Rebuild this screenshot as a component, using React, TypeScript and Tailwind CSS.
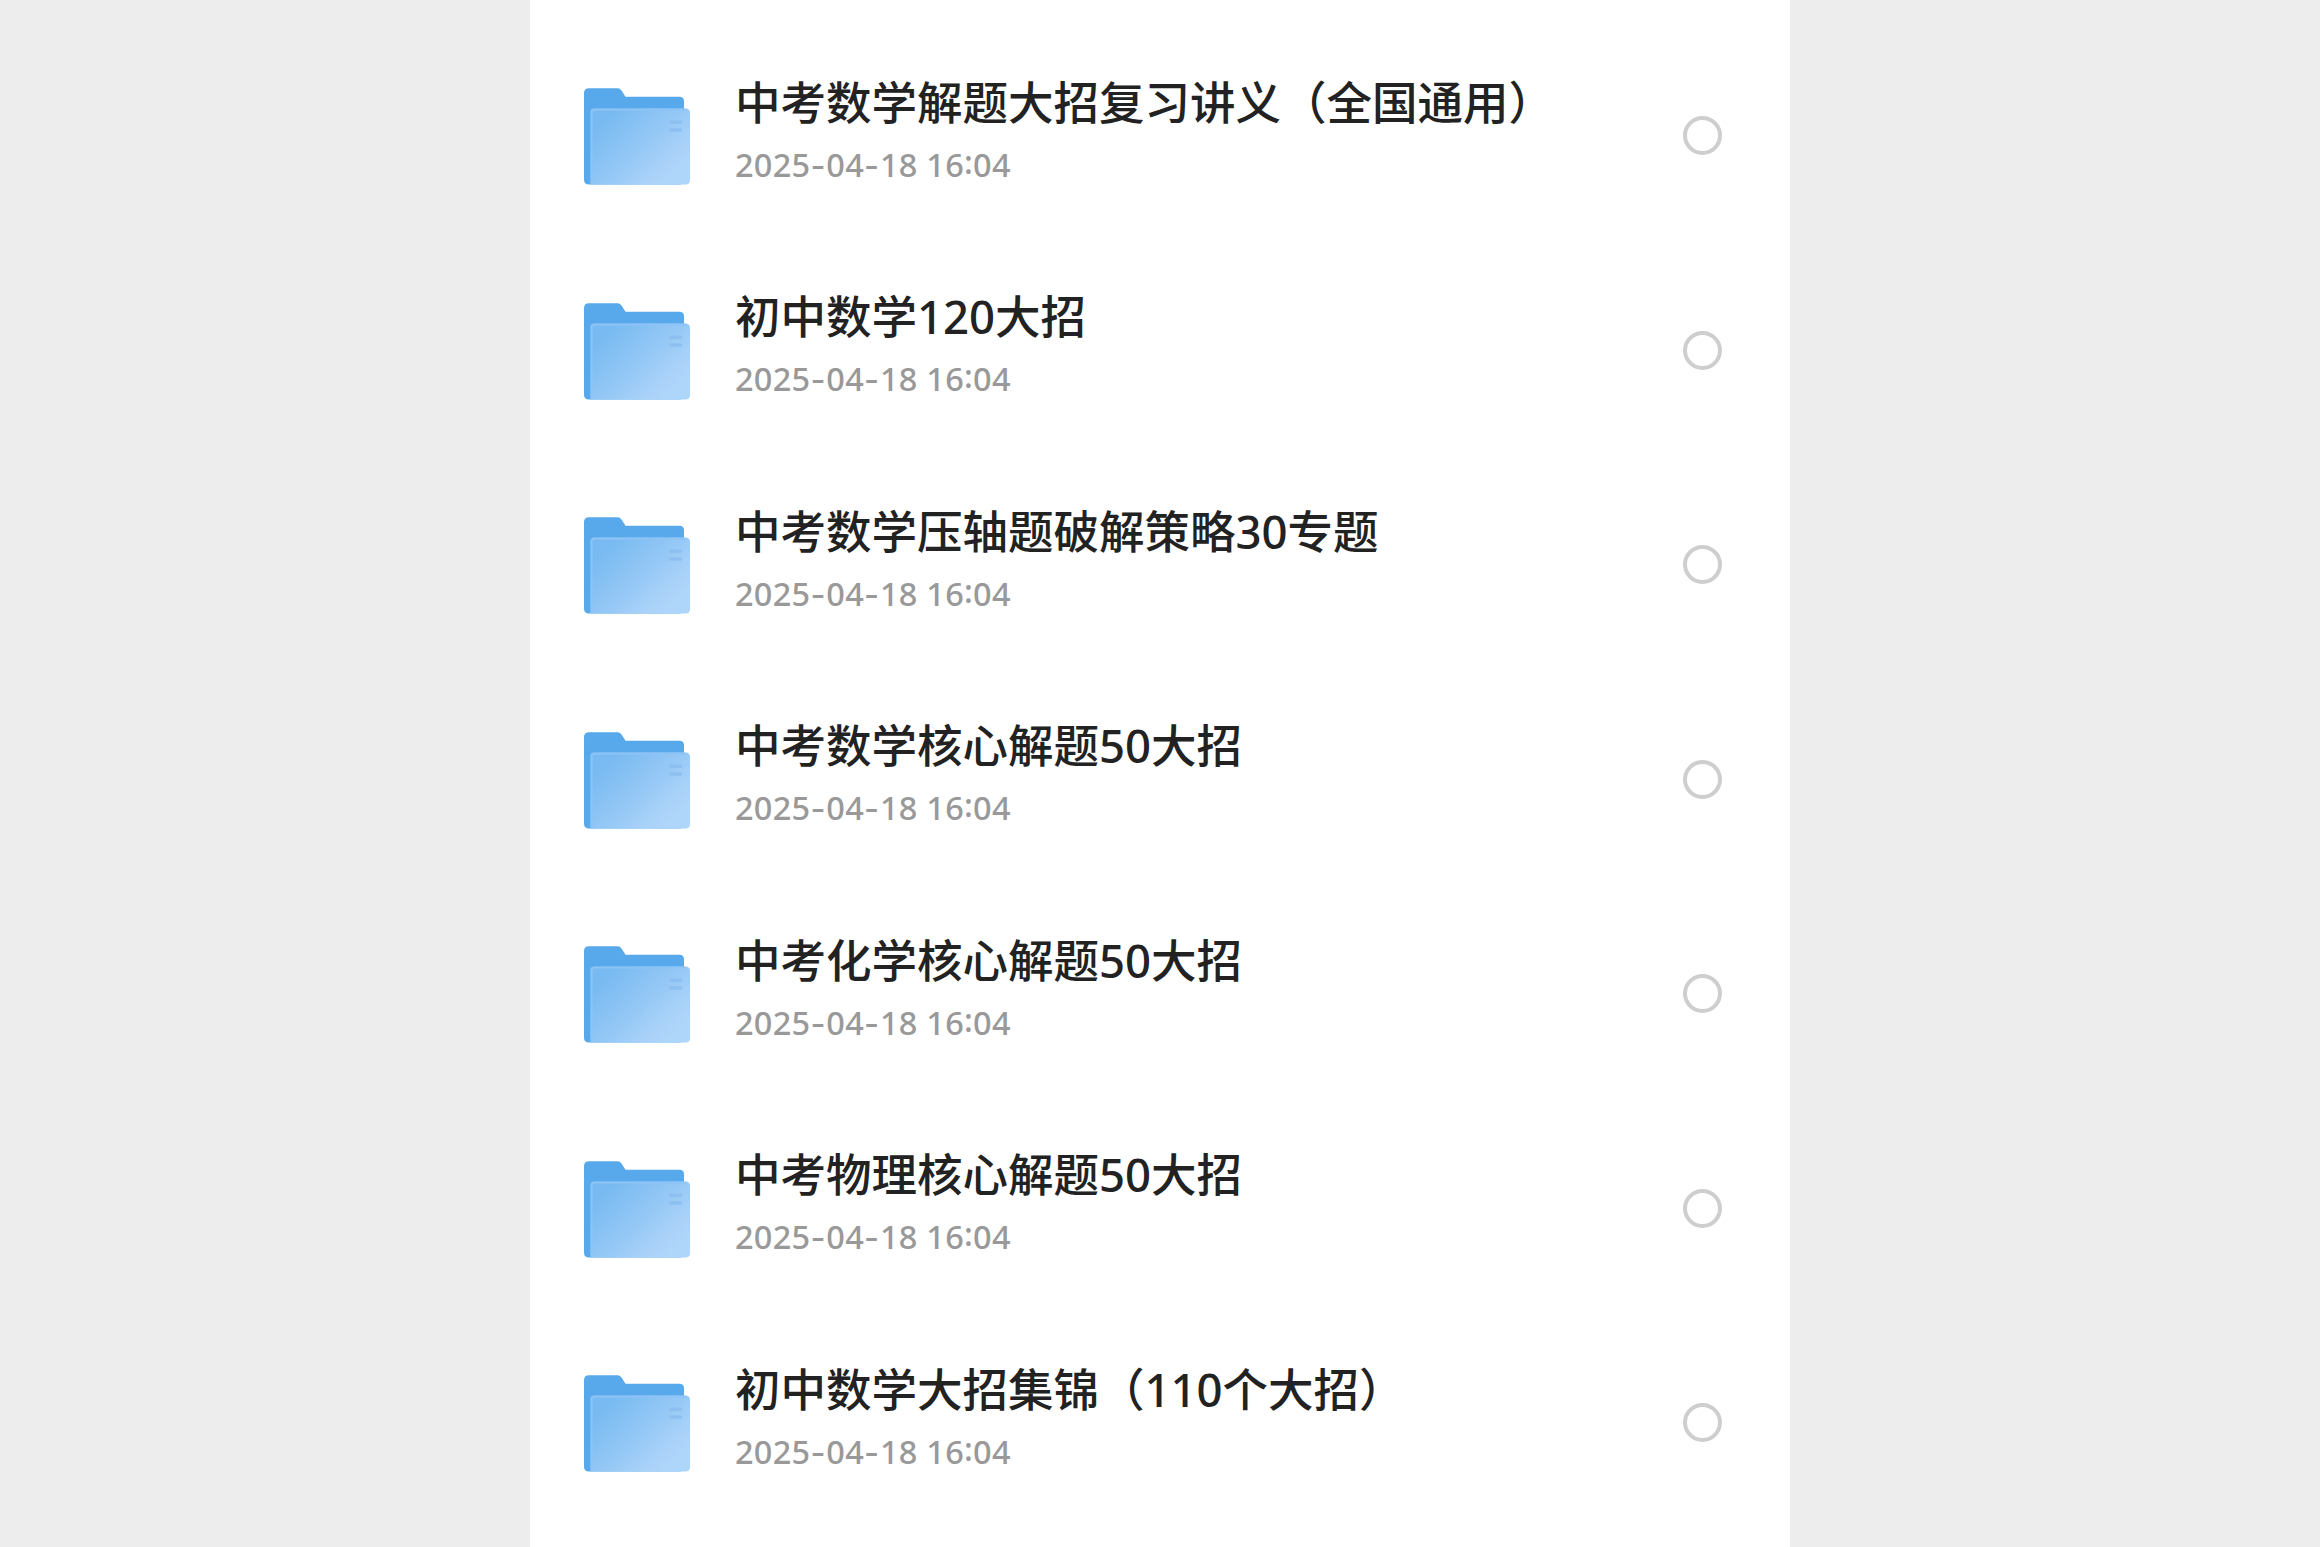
interface FileItem {
  name: string
  modified: string
}

const FILES: FileItem[] = [
  { name: '中考数学解题大招复习讲义（全国通用）', modified: '2025-04-18 16:04' },
  { name: '初中数学120大招', modified: '2025-04-18 16:04' },
  { name: '中考数学压轴题破解策略30专题', modified: '2025-04-18 16:04' },
  { name: '中考数学核心解题50大招', modified: '2025-04-18 16:04' },
  { name: '中考化学核心解题50大招', modified: '2025-04-18 16:04' },
  { name: '中考物理核心解题50大招', modified: '2025-04-18 16:04' },
  { name: '初中数学大招集锦（110个大招）', modified: '2025-04-18 16:04' },
]

function FolderIcon() {
  return (
    <svg className="mt-px h-[97px] w-[106px] shrink-0" viewBox="0 0 106 97" fill="none">
      <defs>
        <linearGradient id="folder-front" x1="18" y1="34" x2="80" y2="98" gradientUnits="userSpaceOnUse">
          <stop offset="0" stopColor="#78BAF1" />
          <stop offset="0.55" stopColor="#97C9F6" />
          <stop offset="0.85" stopColor="#ABD3F9" />
          <stop offset="1" stopColor="#AED5FA" />
        </linearGradient>
      </defs>
      {/* back panel with the tab */}
      <path
        d="M5 0.3H33.5Q36 0.3 37.5 2.5L41.5 8.8H95.5Q100 8.8 100 13.3V92Q100 96.5 95.5 96.5H5Q0 96.5 0 91.5V5.3Q0 0.3 5 0.3Z"
        fill="#57A9EC"
      />
      {/* front panel */}
      <path
        d="M10 20.5H101.5Q106 20.5 106 25V92Q106 96.5 101.5 96.5H6.5V24Q6.5 20.5 10 20.5Z"
        fill="url(#folder-front)"
      />
      <path d="M7.5 95V24.2Q7.5 21.5 10.5 21.5H101" stroke="#8DC4F5" strokeWidth="2" />
      <path d="M86.500 34.300H96.500M86.500 42H96.500" stroke="#8DC0F1" strokeWidth="3.4" strokeLinecap="round" />
    </svg>
  )
}

/** Timestamp with wide dashes and a raised colon between the digits. */
function Timestamp({ value }: { value: string }) {
  return (
    <p className="text-[32.5px] leading-[60px] font-medium tracking-[0.25px] text-[#999999]">
      {value.split(/([-:])/).map((part, i) => {
        if (part === '-') return <span key={i} className="font-['Inter'] leading-none tracking-[0.9px]">-</span>
        if (part === ':') return <span key={i} className="relative -top-[3px]">:</span>
        return <span key={i}>{part}</span>
      })}
    </p>
  )
}

function FileRow({ file }: { file: FileItem }) {
  return (
    <li className="flex h-[214.5px] items-center pr-[68px] pl-[54px]">
      <FolderIcon />
      <div className="mb-[7.5px] ml-[45px] flex-1 whitespace-nowrap">
        <p className="mb-[2px] text-[45.5px] leading-[62px] font-medium text-[#222222]">{file.name}</p>
        <Timestamp value={file.modified} />
      </div>
      <span className="mb-px h-[39px] w-[39px] rounded-full border-4 border-[#cecece]" />
    </li>
  )
}

export default function App() {
  return (
    <div className="flex h-[1547px] justify-center overflow-hidden bg-[#ededed] font-['Noto_Sans','Noto_Sans_CJK_SC',sans-serif]">
      <ul className="w-[1260px] bg-white pt-[29px]">
        {FILES.map((file) => (
          <FileRow key={file.name} file={file} />
        ))}
      </ul>
    </div>
  )
}
